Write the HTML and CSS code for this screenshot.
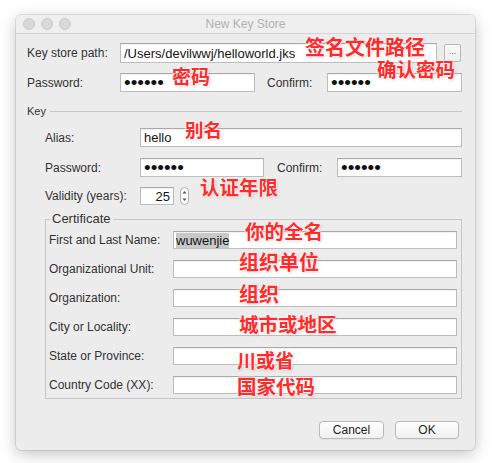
FILE: index.html
```html
<!DOCTYPE html>
<html lang="en">
<head>
<meta charset="utf-8">
<title>New Key Store</title>
<link rel="stylesheet" href="styles.css">
</head>
<body>
<div class="window">
  <div class="titlebar">
    <div class="lights"><span class="light"></span><span class="light"></span><span class="light"></span></div>
    <div class="title">New Key Store</div>
    <div></div>
  </div>
  <div class="content">
    <div class="row r-path">
      <span class="lbl w-top">Key store path:</span>
      <div class="field f-path">/Users/devilwwj/helloworld.jks</div>
      <div class="browse">...</div>
    </div>
    <div class="row r-pass">
      <span class="lbl w-top">Password:</span>
      <div class="field f-pass"><span class="dots">••••••</span></div>
      <span class="lbl w-confirm c-top">Confirm:</span>
      <div class="field f-pass"><span class="dots">••••••</span></div>
    </div>
    <div class="sep"><span class="sep-text">Key</span><div class="sep-line"></div></div>
    <div class="key">
      <div class="row r-alias">
        <span class="lbl w-key">Alias:</span>
        <div class="field f-alias">hello</div>
      </div>
      <div class="row r-kpass">
        <span class="lbl w-key">Password:</span>
        <div class="field f-kpass"><span class="dots">••••••</span></div>
        <span class="lbl w-confirm c-key">Confirm:</span>
        <div class="field f-kconf"><span class="dots">••••••</span></div>
      </div>
      <div class="row r-valid">
        <span class="lbl w-key">Validity (years):</span>
        <div class="field f-valid">25</div>
        <div class="stepper">
          <svg width="9" height="18" viewBox="0 0 9 18"><path d="M2.5 6.5 L4.5 4 L6.5 6.5 Z" fill="#555"/><path d="M2.5 11.5 L4.5 14 L6.5 11.5 Z" fill="#555"/></svg>
        </div>
      </div>
      <fieldset class="cert">
        <legend>Certificate</legend>
        <div class="crow first">
          <span class="lbl w-cert">First and Last Name:</span>
          <div class="field f-cert"><span class="sel">wuwenjie</span></div>
        </div>
        <div class="crow">
          <span class="lbl w-cert">Organizational Unit:</span>
          <div class="field f-cert"></div>
        </div>
        <div class="crow">
          <span class="lbl w-cert">Organization:</span>
          <div class="field f-cert"></div>
        </div>
        <div class="crow">
          <span class="lbl w-cert">City or Locality:</span>
          <div class="field f-cert"></div>
        </div>
        <div class="crow">
          <span class="lbl w-cert">State or Province:</span>
          <div class="field f-cert"></div>
        </div>
        <div class="crow">
          <span class="lbl w-cert">Country Code (XX):</span>
          <div class="field f-cert"></div>
        </div>
      </fieldset>
    </div>
    <div class="buttons">
      <div class="btn btn-cancel">Cancel</div>
      <div class="btn btn-ok">OK</div>
    </div>
  </div>

  <span class="note n1">签名文件路径</span>
  <span class="note n2">确认密码</span>
  <span class="note n3">密码</span>
  <span class="note n4">别名</span>
  <span class="note n5">认证年限</span>
  <span class="note n6">你的全名</span>
  <span class="note n7">组织单位</span>
  <span class="note n8">组织</span>
  <span class="note n9">城市或地区</span>
  <span class="note n10">川或省</span>
  <span class="note n11">国家代码</span>
</div>
</body>
</html>
```
FILE: styles.css
```css
html, body {
  margin: 0;
  padding: 0;
  background: #ffffff;
}
body {
  width: 500px;
  height: 463px;
  overflow: hidden;
  padding: 15px 0 0 16px;
  box-sizing: border-box;
  font-family: "Liberation Sans", Arial, sans-serif;
}
.window {
  position: relative;
  width: 459px;
  height: 435px;
  background: #ececec;
  border-radius: 5px;
  box-shadow: 0 0 0 1px rgba(0,0,0,0.09), 0 4px 16px rgba(0,0,0,0.24);
}
.titlebar {
  height: 18px;
  border-bottom: 1px solid #d4d4d4;
  background: #efefef;
  border-radius: 5px 5px 0 0;
  display: grid;
  grid-template-columns: 1fr auto 1fr;
  align-items: center;
}
.lights {
  display: flex;
  gap: 6px;
  padding-left: 7px;
}
.light {
  width: 10px;
  height: 10px;
  border-radius: 50%;
  background: #d8d8d8;
  border: 0.5px solid #cacaca;
}
.title {
  font-size: 12px;
  color: #b2b2b2;
}
.content {
  padding: 0 13px 0 11px;
}
.row {
  display: flex;
  align-items: center;
}
.lbl {
  font-size: 12px;
  color: #333333;
  flex: none;
  white-space: nowrap;
}
.field {
  box-sizing: border-box;
  background: #ffffff;
  border: 1px solid #bcbcbc;
  border-top-color: #a9a9a9;
  box-shadow: inset 0 1px 1px rgba(0,0,0,0.06);
  display: flex;
  align-items: center;
  padding: 0 3px;
  font-size: 13px;
  color: #151515;
  flex: none;
  overflow: hidden;
  white-space: nowrap;
}
.dots {
  font-size: 19px;
  line-height: 1;
  letter-spacing: 0;
  color: #111;
}
.r-path { margin-top: 9px; height: 20px; }
.w-top { width: 93px; }
.f-path { width: 317px; height: 20px; }
.browse {
  margin-left: 7px;
  width: 17px;
  height: 18px;
  box-sizing: border-box;
  border: 1px solid #b8b8b8;
  border-radius: 2px;
  background: linear-gradient(#fbfbfb, #eeeeee);
  font-size: 9px;
  color: #666;
  display: flex;
  align-items: center;
  justify-content: center;
  line-height: 1;
  padding-bottom: 3px;
}
.r-pass { margin-top: 10px; height: 19px; }
.f-pass { width: 135px; height: 19px; }
.w-confirm { width: 60px; }
.c-top { margin-left: 12px; }

.sep {
  margin-top: 12px;
  height: 14px;
  display: flex;
  align-items: center;
  gap: 4px;
}
.sep-text {
  font-size: 11px;
  color: #333;
}
.sep-line {
  flex: 1;
  height: 0;
  border-top: 1px solid #c8c8c8;
}

.key { padding-left: 18px; }
.w-key { width: 95px; }
.r-alias { margin-top: 10px; height: 19px; }
.f-alias { width: 322px; height: 19px; }
.r-kpass { margin-top: 11px; height: 19px; }
.f-kpass { width: 124px; height: 19px; }
.c-key { margin-left: 13px; }
.f-kconf { width: 125px; height: 19px; }
.r-valid { margin-top: 10px; height: 18px; }
.f-valid { width: 34px; height: 18px; justify-content: flex-end; }
.stepper {
  margin-left: 6px;
  width: 9px;
  height: 18px;
  box-sizing: border-box;
  border: 1px solid #aeaeae;
  border-radius: 5px;
  background: #fbfbfb;
  display: flex;
  align-items: center;
  justify-content: center;
}
.stepper svg { display: block; flex: none; }

.cert {
  box-sizing: border-box;
  width: 417px;
  margin: 7px 0 0 0;
  padding: 0 4px 4px 3px;
  border: 1px solid #c6c6c6;
  min-inline-size: 0;
}
.cert legend {
  font-size: 13px;
  line-height: 14px;
  color: #333;
  padding: 0 2px;
  margin-left: 1px;
}
.crow {
  display: flex;
  align-items: center;
  height: 18px;
  margin-top: 11px;
}
.crow.first { margin-top: 5px; }
.w-cert { width: 124px; }
.f-cert { width: 284px; height: 18px; padding: 0 2px; }
.sel { background: #c9c9c9; }

.buttons {
  display: flex;
  justify-content: flex-end;
  gap: 11px;
  margin-top: 22px;
  margin-right: 3px;
}
.btn {
  box-sizing: border-box;
  height: 18px;
  border: 1px solid #b9b9b9;
  border-radius: 4px;
  background: linear-gradient(#ffffff, #f0f0f0);
  box-shadow: 0 1px 0 rgba(0,0,0,0.04);
  font-size: 12px;
  color: #222;
  display: flex;
  align-items: center;
  justify-content: center;
}
.btn-cancel { width: 65px; }
.btn-ok { width: 64px; }

.note {
  position: absolute;
  font-family: "Noto Sans CJK SC", sans-serif;
  font-weight: 700;
  font-size: 19.5px;
  line-height: 1;
  color: #ff2a2a;
  white-space: nowrap;
  text-shadow: 0 0 2px #fff, 0 0 2px #fff, 0 0 3px #fff, 1px 1px 3px rgba(0,0,0,0.25);
}
.n1 { left: 289px; top: 22px; font-size: 20px; }
.n2 { left: 361px; top: 44px; }
.n3 { left: 156px; top: 51px; font-size: 19px; }
.n4 { left: 169px; top: 105px; font-size: 18.5px; }
.n5 { left: 184px; top: 162px; }
.n6 { left: 229px; top: 206px; }
.n7 { left: 223px; top: 237px; font-size: 20px; }
.n8 { left: 223px; top: 269px; font-size: 20px; }
.n9 { left: 223px; top: 299px; }
.n10 { left: 221px; top: 335px; font-size: 19px; }
.n11 { left: 221px; top: 361px; }
```
